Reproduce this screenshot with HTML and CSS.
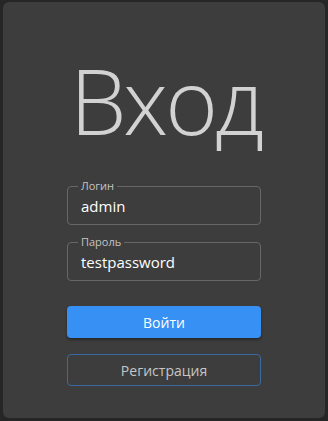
FILE: index.html
```html
<!DOCTYPE html>
<html lang="ru">

<head>
    <meta charset="UTF-8">
    <meta name="viewport" content="width=device-width, initial-scale=1.0">
    <title>Вход</title>
    <link rel="stylesheet" href="styles.css">
</head>

<body>

    <div class="card">
        <h1 class="title">Вход</h1>

        <form class="form">
            <fieldset class="field">
                <legend>Логин</legend>
                <input type="text" value="admin">
            </fieldset>

            <fieldset class="field">
                <legend>Пароль</legend>
                <input type="text" value="testpassword">
            </fieldset>

            <button type="button" class="btn btnPrimary">Войти</button>
            <button type="button" class="btn btnOutline">Регистрация</button>
        </form>
    </div>

</body>

</html>
```

FILE: styles.css
```css
html,
body {
    height: 100%;
}

body {
    margin: 0;
    padding: 2px 3px 3px;
    box-sizing: border-box;
    background-color: #262626;
    font-family: "Open Sans", "Noto Sans", sans-serif;
}

.card {
    height: 100%;
    background-color: #3d3d3d;
    border-radius: 6px;
    display: flex;
    flex-direction: column;
    align-items: center;
}

.title {
    margin: 53px 0 0 3px;
    font-size: 90px;
    font-weight: 300;
    line-height: 1;
    letter-spacing: -3px;
    color: #d2d2d2;
}

.form {
    width: 194px;
    margin-top: 34px;
    display: flex;
    flex-direction: column;
}

.field {
    margin: 0 0 10px;
    padding: 2px 10px 7px;
    border: 1px solid #676767;
    border-radius: 4px;
}

.field legend {
    padding: 0 3px;
    font-size: 11px;
    line-height: 14px;
    color: #c4c4c4;
}

.field input {
    width: 100%;
    padding: 0 3px;
    border: none;
    outline: none;
    background: transparent;
    font-family: inherit;
    font-size: 15px;
    line-height: 22px;
    color: #ffffff;
    box-sizing: border-box;
}

.btn {
    height: 32px;
    border-radius: 4px;
    font-family: inherit;
    font-size: 14px;
}

.btnPrimary {
    margin-top: 15px;
    border: none;
    background-color: #3790f3;
    color: #ffffff;
    box-shadow: 0 2px 3px rgba(0, 0, 0, 0.35);
}

.btnOutline {
    margin-top: 16px;
    border: 1px solid #3a6a9f;
    background-color: transparent;
    color: #c6c6c6;
}
```
